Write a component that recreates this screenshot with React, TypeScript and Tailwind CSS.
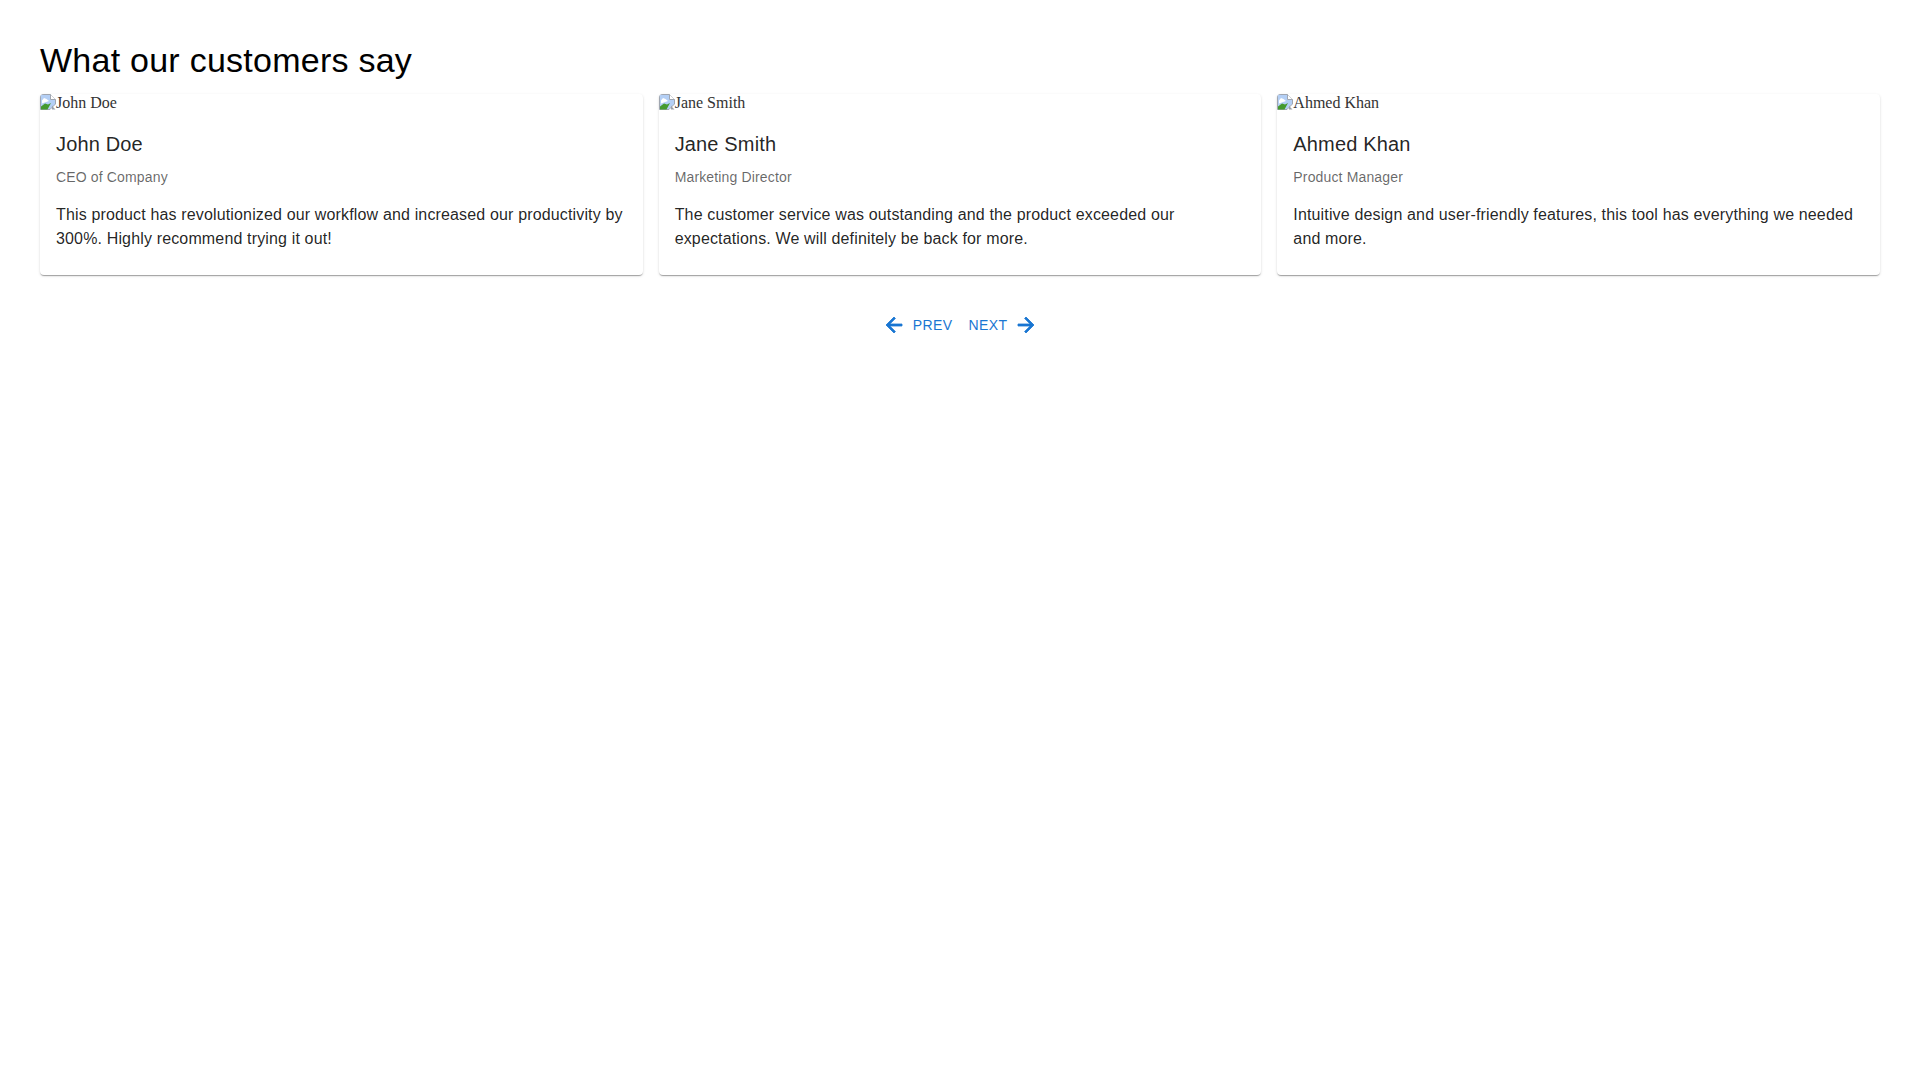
const testimonials = [
  {
    name: 'John Doe',
    role: 'CEO of Company',
    quote: 'This product has revolutionized our workflow and increased our productivity by 300%. Highly recommend trying it out!',
  },
  {
    name: 'Jane Smith',
    role: 'Marketing Director',
    quote: 'The customer service was outstanding and the product exceeded our expectations. We will definitely be back for more.',
  },
  {
    name: 'Ahmed Khan',
    role: 'Product Manager',
    quote: 'Intuitive design and user-friendly features, this tool has everything we needed and more.',
  },
]

// placeholder the browser shows for a picture that failed to load
function BrokenImage() {
  return (
    <svg width="16" height="16" viewBox="0 0 16 16" className="shrink-0">
      <path d="M0.5 0.5H10.5L15.5 5.5V10L10 15.5H0.5Z" fill="#b4cff5" stroke="#a0a6b0" />
      <path d="M10.5 0.5V5.5H15.5" fill="#ffffff" stroke="#a0a6b0" />
      <path d="M2 6.5L4 4L6.5 5L9 7L2 9.5Z" fill="#ffffff" />
      <path d="M1 15.5V12.5L5 9.5L8 10.5L11 9L7.5 15.5Z" fill="#459a2e" />
      <path d="M10.5 16L16 10.5V16Z" fill="#ffffff" />
      <path d="M12 11.5L13.5 13.5L15.5 15.5H12Z" fill="#9aa0a8" />
    </svg>
  )
}

function ArrowBack() {
  return (
    <svg width="24" height="24" viewBox="0 0 24 24" fill="currentColor" stroke="currentColor" strokeWidth="0.8" className="ml-[-3px] mr-[7px]">
      <path d="M20 11H7.83l5.59-5.59L12 4l-8 8 8 8 1.41-1.41L7.83 13H20v-2z" />
    </svg>
  )
}

function ArrowForward() {
  return (
    <svg width="24" height="24" viewBox="0 0 24 24" fill="currentColor" stroke="currentColor" strokeWidth="0.8" className="ml-[7px] mr-[-3px]">
      <path d="M12 4l-1.41 1.41L16.17 11H4v2h12.17l-5.58 5.59L12 20l8-8z" />
    </svg>
  )
}

export default function App() {
  return (
    <div className="min-h-screen bg-white p-10 font-['Liberation_Sans',Arial,sans-serif]">
      <h1 className="mb-[14px] text-[34px] leading-[40px] tracking-[0.25px] font-normal text-black">
        What our customers say
      </h1>

      <div className="grid grid-cols-3 gap-4">
        {testimonials.map((t) => (
          <div
            key={t.name}
            className="overflow-hidden rounded bg-white shadow-[0_2px_1px_-1px_rgba(0,0,0,0.2),0_1px_1px_0_rgba(0,0,0,0.14),0_1px_3px_0_rgba(0,0,0,0.12)]"
          >
            <div className="flex h-[18px] items-start font-['Liberation_Serif',serif] text-base leading-[18px] text-[#333333]">
              <BrokenImage />
              <span>{t.name}</span>
            </div>
            <div className="px-4 pt-4 pb-6">
              <h6 className="mb-[7px] text-xl leading-8 tracking-[0.15px] text-black/87">{t.name}</h6>
              <p className="mb-4 text-sm leading-5 tracking-[0.15px] text-black/60">{t.role}</p>
              <p className="text-base leading-6 tracking-[0.15px] text-black/87">{t.quote}</p>
            </div>
          </div>
        ))}
      </div>

      <div className="mt-8 flex justify-center text-sm leading-6 tracking-[0.4px] text-[#1976d2]">
        <button className="flex h-9 items-center rounded px-2 uppercase">
          <ArrowBack />
          Prev
        </button>
        <button className="flex h-9 items-center rounded px-2 uppercase">
          Next
          <ArrowForward />
        </button>
      </div>
    </div>
  )
}
